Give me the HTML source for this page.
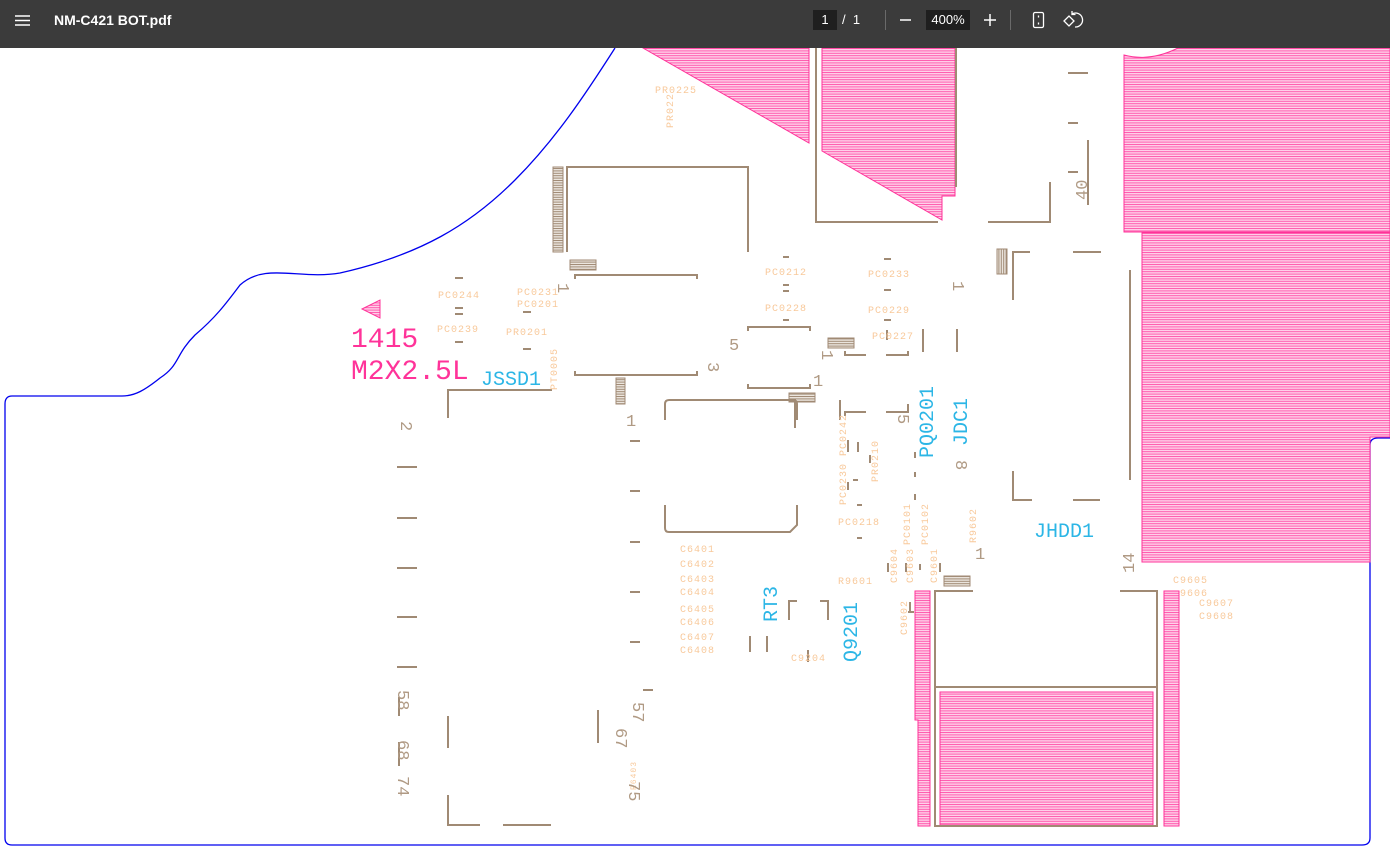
<!DOCTYPE html>
<html><head><meta charset="utf-8">
<style>
html,body{margin:0;padding:0;background:#fff;width:1390px;height:865px;overflow:hidden}
#bar{position:absolute;left:0;top:0;width:1390px;height:48px;background:#3b3b3b;color:#fff;font-family:"Liberation Sans",sans-serif}
#title{position:absolute;left:54px;top:12px;font-size:14px;font-weight:bold}
.pg{position:absolute;top:10px;height:20px;background:#1f1f1f;font-size:13px;line-height:20px;text-align:center}
svg{position:absolute;left:0;top:0}
</style></head><body>
<svg width="1390" height="865" viewBox="0 0 1390 865" font-family="Liberation Mono, monospace">
<defs>
<pattern id="ph" width="6" height="2.4" patternUnits="userSpaceOnUse"><rect width="6" height="2.4" fill="#ffd3ea"/><rect width="6" height="1" fill="#ff5aae"/></pattern>
<pattern id="bh" width="6" height="2.4" patternUnits="userSpaceOnUse"><rect width="6" height="2.4" fill="#ece6df"/><rect width="6" height="1" fill="#a08a74"/></pattern>
<pattern id="bv" width="2.4" height="6" patternUnits="userSpaceOnUse"><rect width="2.4" height="6" fill="#ece6df"/><rect width="1" height="6" fill="#a08a74"/></pattern>
</defs>
<!-- board outline -->
<path d="M615,48 C585,95 555,140 515,180 C470,225 420,255 340,273 C300,280 265,262 240,285 C225,305 215,318 195,335 C175,355 180,365 160,378 C145,390 135,396 122,396 L12,396 Q5,396 5,404 L5,838 Q5,845 12,845 L1362,845 Q1370,845 1370,838 L1370,445 Q1370,438 1378,438 L1390,438" fill="none" stroke="#0000ee" stroke-width="1.3"/>
<!-- pink hatches -->
<g fill="url(#ph)" stroke="#ff3399" stroke-width="1">
<polygon points="643,48 809,48 809,143"/>
<polygon points="822,48 955,48 955,196 942,196 942,220 822,151"/>
<path d="M1124,55 Q1150,62 1178,48 L1390,48 L1390,232 L1124,232 Z"/>
<path d="M1142,233 L1390,233 L1390,437 L1370,437 L1370,562 L1142,562 Z"/>
<path d="M915,591 L930,591 L930,826 L918,826 L918,720 L915,720 Z"/>
<rect x="1164" y="591" width="15" height="235"/>
<rect x="940" y="692" width="213" height="133"/>
<polygon points="362,309 380,300 380,318"/>
</g>
<!-- brown hatches -->
<g stroke="#a08a74" stroke-width="1">
<rect x="553" y="167" width="10" height="85" fill="url(#bh)"/>
<rect x="570" y="260" width="26" height="10" fill="url(#bh)"/>
<rect x="616" y="378" width="9" height="26" fill="url(#bh)"/>
<rect x="789" y="393" width="26" height="9" fill="url(#bh)"/>
<rect x="828" y="338" width="26" height="10" fill="url(#bh)"/>
<rect x="997" y="249" width="10" height="25" fill="url(#bv)"/>
<rect x="944" y="576" width="26" height="10" fill="url(#bh)"/>
</g>
<!-- brown outlines -->
<g fill="none" stroke="#a08a74" stroke-width="2">
<path d="M816,48 V222 H938"/><path d="M956,48 V187"/>
<path d="M567,252 V167 H748 V252"/>
<path d="M575,279 V275 H697 V279"/><path d="M575,371 V375 H697 V371"/>
<path d="M665,420 V404 Q665,400 669,400 H793 Q797,400 797,404 V420"/>
<path d="M665,505 V528 Q665,532 669,532 H790 L797,525 V505"/>
<path d="M748,331 V327 H810 V331"/><path d="M748,384 V388 H810 V384"/>
<path d="M792,400 H795 V428"/>
<path d="M448,418 V390 H552"/>
<path d="M397,467 H417 M397,518 H417 M397,568 H417 M397,617 H417 M397,667 H417"/>
<path d="M630,441 H640 M630,491 H640 M630,542 H640 M630,592 H640 M630,642 H640 M643,690 H653"/>
<path d="M399,697 V716 M399,742 V766"/>
<path d="M448,716 V748 M448,795 V825 H480 M503,825 H551 M598,710 V743"/>
<path d="M845,416 V412 H866 M886,412 H908 V404"/>
<path d="M845,351 V355 H866 M886,355 H908 V351"/>
<path d="M923,329 V352 M957,329 V352"/>
<path d="M1013,300 V252 H1030 M1073,252 H1101 M1130,270 V480 M1013,471 V500 H1032 M1073,500 H1100"/>
<path d="M1068,73 H1088 M1068,123 H1078 M1068,172 H1078 M1088,140 V205 M988,222 H1050 V182"/>
<path d="M973,591 H935 V826 H1157 V591 H1120 M935,687 H1157"/>
<path d="M789,620 V601 H797 M820,601 H828 V620 M750,636 V652 M767,636 V652"/>
<path d="M455,278 H463 M455,308 H463 M455,314 H463 M455,342 H463 M523,312 H531 M523,349 H531 M783,257 H789 M783,285 H789 M783,291 H789 M783,320 H789 M884,259 H891 M884,290 H891 M884,320 H891 M887,330 V340"/>
<path d="M840,400 V420 M858,442 V452 M853,480 H858 M870,455 V463 M915,452 V458 M915,472 V477 M915,494 V500 M857,505 H862 M857,538 H862 M888,563 V572 M906,563 V572 M920,564 V570 M940,563 V572 M908,612 H914 M910,602 V612 M808,650 V662 M848,440 V452 M848,482 V490"/>
</g>
<!-- labels -->
<g fill="#f8c99b" font-size="10" letter-spacing="1">
<text x="438" y="298">PC0244</text><text x="517" y="295">PC0231</text><text x="517" y="307">PC0201</text>
<text x="437" y="332">PC0239</text><text x="506" y="335">PR0201</text>
<text x="765" y="275">PC0212</text><text x="765" y="311">PC0228</text>
<text x="868" y="277">PC0233</text><text x="868" y="313">PC0229</text><text x="872" y="339">PC0227</text>
<text x="838" y="525">PC0218</text><text x="838" y="584">R9601</text>
<text x="680" y="552">C6401</text><text x="680" y="567">C6402</text><text x="680" y="582">C6403</text><text x="680" y="595">C6404</text>
<text x="680" y="612">C6405</text><text x="680" y="625">C6406</text><text x="680" y="640">C6407</text><text x="680" y="653">C6408</text>
<text x="791" y="661">C9204</text>
<text x="1173" y="583">C9605</text><text x="1180" y="596">9606</text><text x="1199" y="606">C9607</text><text x="1199" y="619">C9608</text>
<text x="655" y="93">PR0225</text>
<text transform="translate(673,128) rotate(-90)">PR022</text>
<text transform="translate(557,390) rotate(-90)">PT0005</text>
<text transform="translate(846,505) rotate(-90)">PC0230 PC0242</text>
<text transform="translate(878,482) rotate(-90)">PR0210</text>
<text transform="translate(910,545) rotate(-90)">PC0101</text>
<text transform="translate(928,545) rotate(-90)">PC0102</text>
<text transform="translate(976,543) rotate(-90)">R9602</text>
<text transform="translate(897,583) rotate(-90)">C9604</text>
<text transform="translate(913,583) rotate(-90)">C9603</text>
<text transform="translate(937,583) rotate(-90)">C9601</text>
<text transform="translate(907,635) rotate(-90)">C9602</text>
<text transform="translate(636,790) rotate(-90)" font-size="8">R6403</text>
</g>
<!-- pin numbers -->
<g fill="#b09a84" font-size="17">
<text transform="translate(558,283) rotate(90)">1</text>
<text x="729" y="350">5</text>
<text transform="translate(708,362) rotate(90)">3</text>
<text x="813" y="386">1</text><text x="626" y="426">1</text>
<text transform="translate(822,350) rotate(90)">1</text>
<text transform="translate(953,281) rotate(90)">1</text>
<text transform="translate(898,414) rotate(90)">5</text>
<text transform="translate(956,460) rotate(90)">8</text>
<text x="975" y="559">1</text>
<text transform="translate(1134,573) rotate(-90)">14</text>
<text transform="translate(1087,200) rotate(-90)">40</text>
<text transform="translate(401,421) rotate(90)">2</text>
<text transform="translate(398,690) rotate(90)">58</text>
<text transform="translate(398,740) rotate(90)">68</text>
<text transform="translate(398,776) rotate(90)">74</text>
<text transform="translate(633,702) rotate(90)">57</text>
<text transform="translate(616,728) rotate(90)">67</text>
<text transform="translate(629,781) rotate(90)">75</text>
</g>
<!-- cyan -->
<g fill="#2cb6e6" font-size="20">
<text x="481" y="385">JSSD1</text>
<text x="1034" y="537">JHDD1</text>
<text transform="translate(933,458) rotate(-90)">PQ0201</text>
<text transform="translate(967,446) rotate(-90)">JDC1</text>
<text transform="translate(777,622) rotate(-90)">RT3</text>
<text transform="translate(857,662) rotate(-90)">Q9201</text>
</g>
<g fill="#ff3399" font-size="28">
<text x="351" y="347">1415</text><text x="351" y="379">M2X2.5L</text>
</g>
</svg>
<div id="bar">
<svg width="20" height="48" style="left:14px"><path d="M1,16H16M1,20.5H16M1,25H16" stroke="#fff" stroke-width="1.6"/></svg>
<div id="title">NM-C421 BOT.pdf</div>
<div class="pg" style="left:813px;width:24px">1</div>
<div style="position:absolute;left:842px;top:12px;font-size:13px">/&nbsp;&nbsp;1</div>
<div style="position:absolute;left:885px;top:10px;width:1px;height:20px;background:#6a6a6a"></div>
<svg width="20" height="48" style="left:896px"><path d="M4,20H15" stroke="#fff" stroke-width="1.5"/></svg>
<div class="pg" style="left:926px;width:44px">400%</div>
<svg width="20" height="48" style="left:980px"><path d="M4,20H16M10,14V26" stroke="#fff" stroke-width="1.5"/></svg>
<div style="position:absolute;left:1010px;top:10px;width:1px;height:20px;background:#6a6a6a"></div>
<svg width="20" height="48" style="left:1029px"><rect x="4.5" y="12.5" width="10" height="15" rx="1.5" fill="none" stroke="#fff" stroke-width="1.3"/><path d="M9.5,15.5V17.5M9.5,22.5V24.5" stroke="#fff" stroke-width="1.3"/></svg>
<svg width="24" height="48" style="left:1060px"><path d="M4,21 L9,16 L14,21 L9,26 Z" fill="none" stroke="#fff" stroke-width="1.3"/><path d="M12,14 A7,7 0 1 1 15,27" fill="none" stroke="#fff" stroke-width="1.3"/><path d="M12,11 L12,14.5 L15.5,14.5" fill="none" stroke="#fff" stroke-width="1.3"/></svg>
</div>
</body></html>
